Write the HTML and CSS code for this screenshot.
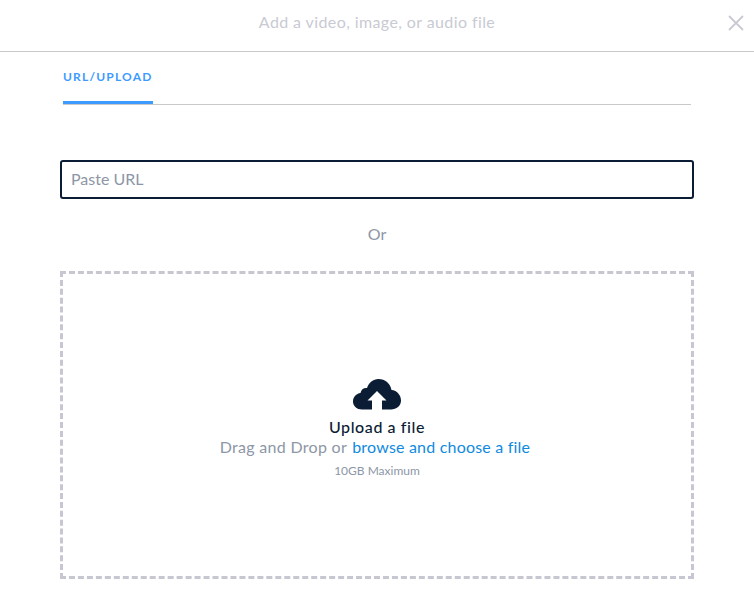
FILE: index.html
```html
<!DOCTYPE html>
<html lang="en">
<head>
    <meta charset="utf-8">
    <title>Add media</title>
    <link rel="stylesheet" href="styles.css">
</head>
<body>
    <header class="modal-header">
        <h1 class="modal-title">Add a video, image, or audio file</h1>
        <button class="modal-close" aria-label="Close">
            <svg width="16" height="16" viewBox="0 0 16 16"><path d="M1 1L15 15M15 1L1 15" stroke="#c9cad3" stroke-width="1.8" fill="none"/></svg>
        </button>
    </header>
    <main class="content">
        <nav class="tabs">
            <a href="#" class="tab active">URL/UPLOAD</a>
        </nav>
        <input class="url-input" type="text" placeholder="Paste URL">
        <p class="or">Or</p>
        <section class="dropzone">
            <svg class="cloud" width="48" height="31" viewBox="0 0 48 31">
                <path d="M9 30.500C4 30.500 0 27 0 22.500C0 18 3.300 14.500 7.500 14C8 10.500 11 8.500 14 9C16 3.500 20 0 25.500 0C32 0 37.500 4.500 38.500 11C44 11.500 48 16 48 21.500C48 26.800 43.500 30.500 38 30.500H29V21.500H33.500L24 12L14.500 21.500H19V30.500Z" fill="#0b1d35"/>
            </svg>
            <div class="upload-title">Upload a file</div>
            <div class="upload-text">Drag and Drop or <a href="#">browse and choose a file</a></div>
            <div class="upload-limit">10GB Maximum</div>
        </section>
    </main>
</body>
</html>
```

FILE: styles.css
```css
/* Font */
body, input, button {font-family: "Lato", sans-serif}
body {margin: 0; background: #fff; height: 595px; overflow: hidden}

/* Header */
.modal-header {height: 51px; border-bottom: 1px solid #c9c9cc; display: flex; align-items: center; justify-content: center; position: relative}
.modal-title {margin: 0; font-size: 16px; letter-spacing: 0.4px; font-weight: 400; color: #c9cad3; padding-bottom: 8px}
.modal-close {position: absolute; top: 15px; right: 10px; padding: 0; border: none; background: none; display: flex}

/* Content */
.content {padding: 0 60px}

/* Tabs */
.tabs {margin: 0 3px; height: 52px; border-bottom: 1px solid #c9c9cc; display: flex}
.tab {width: 90px; box-sizing: border-box; height: 52px; border-bottom: 3px solid #3d9bff; color: #3d9bff; font-size: 12px; font-weight: 700; letter-spacing: 1.2px; text-decoration: none; padding-top: 17px; white-space: nowrap; margin-bottom: -1px}

/* Url field */
.url-input {display: block; box-sizing: border-box; width: 634px; height: 39px; margin-top: 55px; padding: 0 9px 2px; border: 2px solid #0b1d35; border-radius: 3px; font-size: 16px; outline: none; color: #0b1d35}
.url-input::placeholder {color: #8d96a6; opacity: 1}
.or {margin: 25px 0 0; height: 47px; line-height: 20px; text-align: center; font-size: 16px; color: #8d96a6}

/* Drop zone */
.dropzone {box-sizing: border-box; width: 634px; height: 308px; border: 3px dashed #c6c7d1; display: flex; flex-direction: column; align-items: center; padding-top: 105px}
.cloud {display: block}
.upload-title {margin-top: 7px; font-size: 16px; letter-spacing: 0.6px; line-height: 20px; font-weight: 500; color: #0b1d35}
.upload-text {padding-right: 4px; font-size: 16px; letter-spacing: 0.3px; line-height: 20px; color: #8d96a6}
.upload-text a {margin-left: 1px; letter-spacing: 0.2px; color: #0f8ae0; text-decoration: none}
.upload-limit {margin-top: 6px; font-size: 12px; line-height: 16px; color: #8d96a6}
```
